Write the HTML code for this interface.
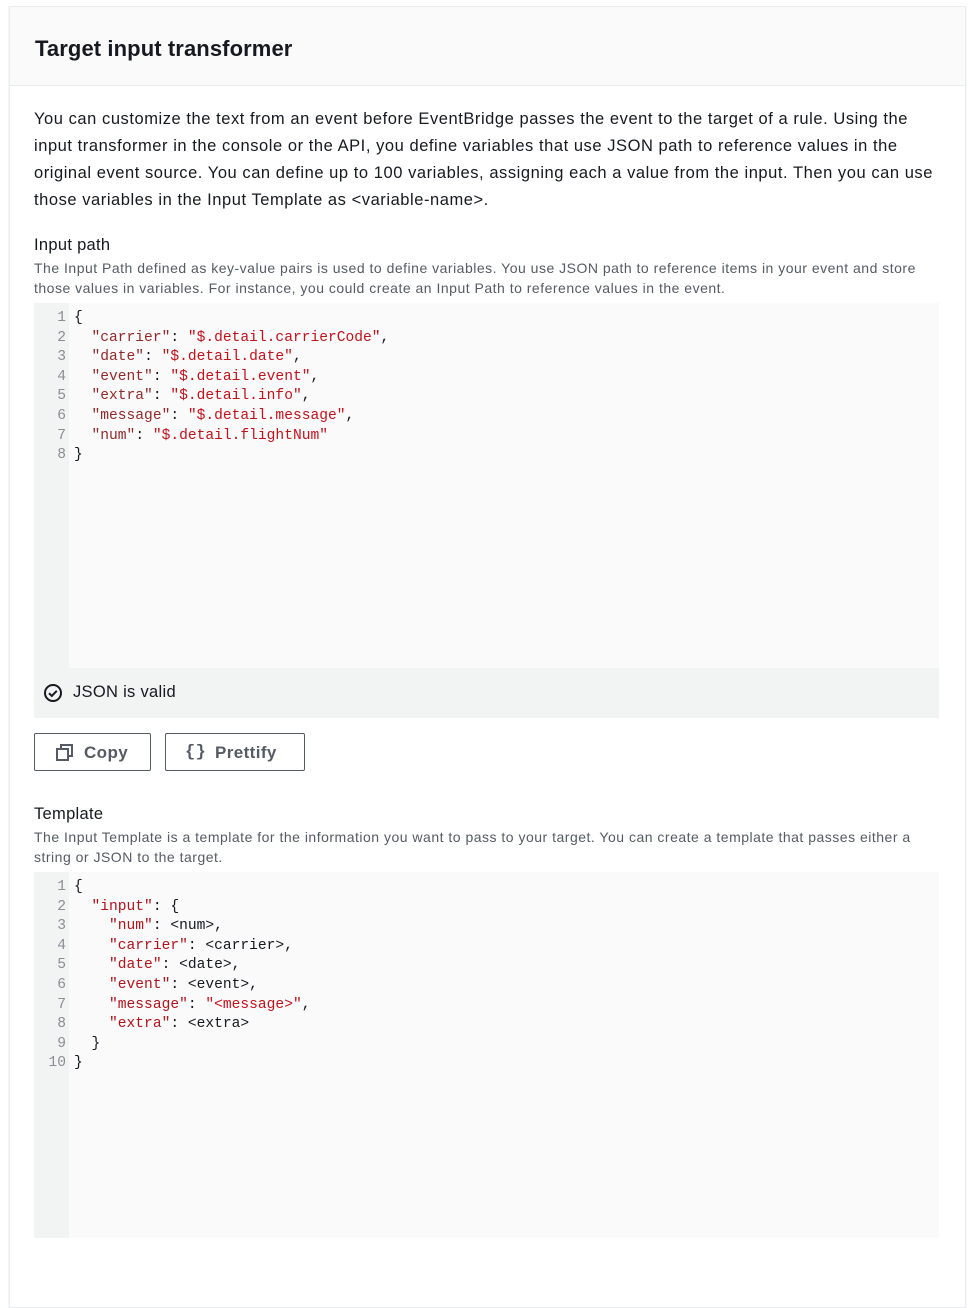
<!DOCTYPE html>
<html><head><style>
body{margin:0;background:#fff;width:972px;height:1249px;overflow:hidden;font-family:"Liberation Sans",sans-serif;color:#16191f}
.card{position:absolute;left:9px;top:6px;width:955px;height:1300px;border:1px solid #eaeded;box-shadow:0 1px 1px rgba(0,28,36,.2)}
.hd{height:78px;background:#fafafa;border-bottom:1px solid #eaeded}
.hd h2{margin:0;position:absolute;left:25px;top:29px;font-size:22px;font-weight:bold;letter-spacing:0.1px}
.p{position:absolute;left:34px;top:106px;width:905px;font-size:16.5px;line-height:27px;letter-spacing:0.55px}
.lbl{position:absolute;left:34px;font-size:16.5px;letter-spacing:0.3px}
.desc{position:absolute;left:34px;width:905px;font-size:14px;line-height:19.5px;color:#545b64;letter-spacing:0.5px}
.ed{position:absolute;left:34px;width:905px;background:#fafafa}
.gut{position:absolute;left:0;top:0;bottom:0;width:35px;background:#f2f3f3}
.code{position:absolute;left:0;top:6px;font-family:"Liberation Mono",monospace;font-size:14.6px;line-height:19.6px;white-space:pre}
.ln{display:inline-block;width:32px;text-align:right;color:#8a8f94;margin-right:8px}
.k{color:#8f2a2a}.s{color:#c1121c}.k2{color:#b0141c}
.val{position:absolute;left:34px;top:668px;width:905px;height:50px;background:#f2f3f3;font-size:16.5px;letter-spacing:0.3px}
.btn{position:absolute;top:733px;height:38px;border:1px solid #545b64;border-radius:2px;font-weight:bold;font-size:17px;color:#545b64;line-height:37px;box-sizing:border-box;letter-spacing:0.4px}
</style></head><body>
<div class="card"><div class="hd"><h2>Target input transformer</h2></div></div>
<div class="p">You can customize the text from an event before EventBridge passes the event to the target of a rule. Using the input transformer in the console or the API, you define variables that use JSON path to reference values in the original event source. You can define up to 100 variables, assigning each a value from the input. Then you can use those variables in the Input Template as &lt;variable-name&gt;.</div>
<div class="lbl" style="top:236px">Input path</div>
<div class="desc" style="top:259px">The Input Path defined as key-value pairs is used to define variables. You use JSON path to reference items in your event and store those values in variables. For instance, you could create an Input Path to reference values in the event.</div>
<div class="ed" style="top:303px;height:365px"><div class="gut"></div><div class="code"><span class="ln">1</span>{
<span class="ln">2</span>  <span class="k">"carrier"</span>: <span class="s">"$.detail.carrierCode"</span>,
<span class="ln">3</span>  <span class="k">"date"</span>: <span class="s">"$.detail.date"</span>,
<span class="ln">4</span>  <span class="k">"event"</span>: <span class="s">"$.detail.event"</span>,
<span class="ln">5</span>  <span class="k">"extra"</span>: <span class="s">"$.detail.info"</span>,
<span class="ln">6</span>  <span class="k">"message"</span>: <span class="s">"$.detail.message"</span>,
<span class="ln">7</span>  <span class="k">"num"</span>: <span class="s">"$.detail.flightNum"</span>
<span class="ln">8</span>}</div></div>
<div class="val"><svg style="position:absolute;left:9px;top:15px" width="20" height="20" viewBox="0 0 20 20"><circle cx="10" cy="10" r="8" fill="none" stroke="#16191f" stroke-width="2"/><path d="M6 10.2l2.8 2.8 5-5.2" fill="none" stroke="#16191f" stroke-width="2"/></svg><span style="position:absolute;left:39px;top:15px">JSON is valid</span></div>
<div class="btn" style="left:34px;width:117px"><svg style="position:absolute;left:21px;top:10px" width="18" height="17" viewBox="0 0 18 17"><rect x="1" y="5" width="11" height="11" fill="none" stroke="#545b64" stroke-width="2"/><path d="M5 5V1h11v11h-4" fill="none" stroke="#545b64" stroke-width="2"/></svg><span style="position:absolute;left:49px">Copy</span></div>
<div class="btn" style="left:165px;width:140px"><span style="position:absolute;left:19px;font-family:'Liberation Mono',monospace">{}</span><span style="position:absolute;left:49px">Prettify</span></div>
<div class="lbl" style="top:805px">Template</div>
<div class="desc" style="top:828px">The Input Template is a template for the information you want to pass to your target. You can create a template that passes either a string or JSON to the target.</div>
<div class="ed" style="top:872px;height:366px"><div class="gut"></div><div class="code"><span class="ln">1</span>{
<span class="ln">2</span>  <span class="k2">"input"</span>: {
<span class="ln">3</span>    <span class="k2">"num"</span>: &lt;num&gt;,
<span class="ln">4</span>    <span class="k2">"carrier"</span>: &lt;carrier&gt;,
<span class="ln">5</span>    <span class="k2">"date"</span>: &lt;date&gt;,
<span class="ln">6</span>    <span class="k2">"event"</span>: &lt;event&gt;,
<span class="ln">7</span>    <span class="k2">"message"</span>: <span class="s">"&lt;message&gt;"</span>,
<span class="ln">8</span>    <span class="k2">"extra"</span>: &lt;extra&gt;
<span class="ln">9</span>  }
<span class="ln">10</span>}</div></div>
</body></html>
